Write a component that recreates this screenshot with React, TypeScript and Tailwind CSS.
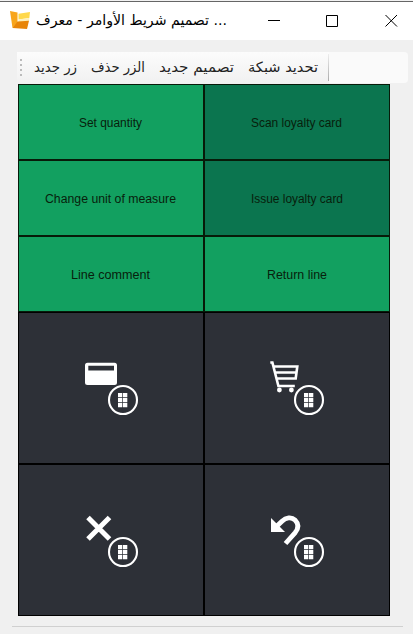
import React from "react";

const menu = [
  { text: "زر جديد", box: "w-[43px]", len: 43 },
  { text: "الزر حذف", box: "w-[54px]", len: 54 },
  { text: "تصميم جديد", box: "w-[75px]", len: 75 },
  { text: "تحديد شبكة", box: "w-[70px]", len: 70 },
];

const buttons = [
  { text: "Set quantity", color: "bg-[#12a060]", len: 63 },
  { text: "Scan loyalty card", color: "bg-[#0b754f]", len: 91 },
  { text: "Change unit of measure", color: "bg-[#12a060]", len: 131 },
  { text: "Issue loyalty card", color: "bg-[#0b754f]", len: 92 },
  { text: "Line comment", color: "bg-[#12a060]", len: 79 },
  { text: "Return line", color: "bg-[#12a060]", len: 60 },
];

function Label({ text, len, rtl, size }: { text: string; len: number; rtl?: boolean; size: number }) {
  return (
    <svg width={len} height="24" className="block overflow-visible" direction={rtl ? "rtl" : "ltr"}>
      <text
        x={len / 2}
        y="16"
        textAnchor="middle"
        textLength={len}
        lengthAdjust="spacingAndGlyphs"
        fontSize={size}
        fill="currentColor"
      >
        {text}
      </text>
    </svg>
  );
}

function Card() {
  return (
    <path fill="#fff" fillRule="evenodd" d="M3.5 2.7H30.5Q33 2.7 33 5.2V22.5Q33 25 30.5 25H3.5Q1 25 1 22.5V5.2Q1 2.7 3.5 2.7ZM4.3 5.7V10.5H30V5.7Z" />
  );
}

function Cart() {
  return (
    <g fill="none" stroke="#fff" strokeWidth="2.6">
      <path d="M0.3 2.5H2.4L8.4 26H24.8M4 6.5H27.3L25.7 18.5H6.5M5.2 12.5H26.4" />
      <circle cx="9.4" cy="30" r="2.4" fill="#fff" stroke="none" />
      <circle cx="21.4" cy="30" r="2.4" fill="#fff" stroke="none" />
    </g>
  );
}

function Cross() {
  return <path d="M4 5.5L25.5 27M25.5 5.5L4 27" stroke="#fff" strokeWidth="5" />;
}

function Undo() {
  return (
    <g>
      <path d="M1 6L1 20H15Z" fill="#fff" />
      <path d="M7 14L12 9.2C16 5.3 21.5 4.6 25 8C29 12 28.7 16.2 25.2 20.6L15.5 31.5" fill="none" stroke="#fff" strokeWidth="4.8" />
    </g>
  );
}

function Tile({ children }: { children: React.ReactNode }) {
  return (
    <div className="border border-black bg-[#2d3037] pl-[65px] pt-[47px]">
      <svg width="56" height="58" viewBox="0 0 56 58" className="block">
        {children}
        <circle cx="39" cy="40" r="14" fill="#2d3037" stroke="#fff" strokeWidth="2.1" />
        <path fill="#fff" d="M34 33h4.3v4.2h-4.3zM39 33h4.3v4.2h-4.3zM34 38h4.3v4.2h-4.3zM39 38h4.3v4.2h-4.3zM34 43h4.3v4.2h-4.3zM39 43h4.3v4.2h-4.3z" />
      </svg>
    </div>
  );
}

export default function App() {
  return (
    <div className="flex h-[634px] w-[413px] flex-col overflow-hidden bg-[#f0f0f0] font-['Liberation_Sans','Noto_Sans',sans-serif]">
      <div className="flex h-[2px] shrink-0 flex-col justify-end bg-[#f2f2f2]">
        <div className="h-px bg-[#666]" />
      </div>
      <header className="flex h-[38px] shrink-0 items-center bg-white pl-[10px] text-black">
        <svg width="21" height="20" viewBox="0 0 21 20" className="shrink-0">
          <path d="M0 0L7.5 1.5V12L2.5 17Z" fill="#f8a51b" />
          <path d="M8.5 2.8L20 1L19.3 7L8.5 8.5Z" fill="#ffd84a" />
          <path d="M8.5 8.5L19.3 7L19 10L8.5 11Z" fill="#fff0b8" />
          <path d="M7.5 10.5L19 9.8L17 18L2.5 17Z" fill="#e88508" />
        </svg>
        <div className="ml-[5px] w-[191px] shrink-0 font-['DejaVu_Sans',sans-serif]">
          <Label text="... تصميم شريط الأوامر - معرف" len={191} rtl size={14.5} />
        </div>
        <svg width="186" height="38" viewBox="0 0 186 38" className="shrink-0" fill="none" stroke="#000">
          <path d="M41 18.5H53M99.5 13.5h11v11h-11zM158.5 13L170 24.5M170 13L158.5 24.5" />
        </svg>
      </header>
      <main className="flex grow flex-col pl-[17px] pt-[12px]">
        <div className="flex h-[31px] w-[391px] shrink-0 items-center rounded-sm bg-[#fafafa]">
          <div className="flex h-[31px] w-[312px] items-center bg-linear-to-b from-[#fcfcfc] to-[#f1f1f1] pl-[3px] font-['DejaVu_Sans',sans-serif] text-[#222]">
            <div className="flex flex-col gap-[3px]">
              <i className="size-[2px] bg-[#bbb]" />
              <i className="size-[2px] bg-[#bbb]" />
              <i className="size-[2px] bg-[#bbb]" />
              <i className="size-[2px] bg-[#bbb]" />
            </div>
            <div className="ml-[12px] flex gap-[14px]">
              {menu.map((m) => (
                <div key={m.text} className={m.box}>
                  <Label text={m.text} len={m.len} rtl size={14} />
                </div>
              ))}
            </div>
            <div className="ml-auto h-[27px] w-px bg-linear-to-b from-[#eee] to-[#aaa]" />
          </div>
        </div>
        <div className="ml-px mt-[1px] grid w-[372px] shrink-0 grid-cols-2 grid-rows-[76px_76px_76px_152px_152px]">
          {buttons.map((b) => (
            <div key={b.text} className={`flex items-center justify-center border border-[#071b09] pr-px pt-[2px] text-[#08200c] ${b.color}`}>
              <Label text={b.text} len={b.len} size={12.5} />
            </div>
          ))}
          <Tile><Card /></Tile>
          <Tile><Cart /></Tile>
          <Tile><Cross /></Tile>
          <Tile><Undo /></Tile>
        </div>
        <div className="-ml-[5px] mt-[10px] h-px w-[391px] shrink-0 bg-[#d0d0d0]" />
      </main>
    </div>
  );
}
